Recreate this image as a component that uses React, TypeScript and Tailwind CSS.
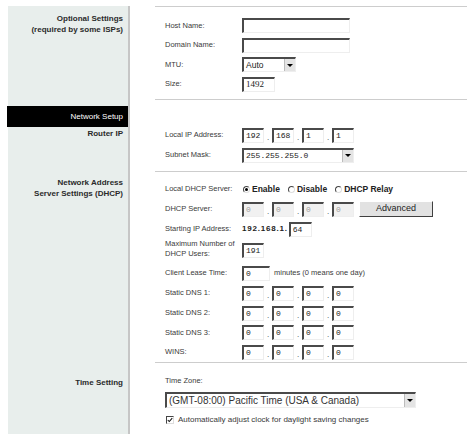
import React from 'react';

const sunken =
  'border-t-2 border-l-2 border-b border-r border-t-[#4a4a4a] border-l-[#4a4a4a] border-b-[#eeeeee] border-r-[#eeeeee]';

const Box: React.FC<{ w: number; value?: string; disabled?: boolean; serif?: boolean }> = ({ w, value = '', disabled, serif }) => (
  <div
    className={`${sunken} h-[15px] flex items-center pl-[2px] overflow-hidden ${disabled ? 'bg-[#f1f1f1] text-[#a0a0a0]' : 'bg-white text-[#222]'} ${
      serif ? "font-['Liberation_Serif',serif] text-[9px] text-[#9a9a9a]" : "font-['Liberation_Mono',monospace] text-[8px]"
    }`}
    style={{ width: w }}
  >
    {value}
  </div>
);

const Arrow: React.FC = () => (
  <div className="w-[11px] h-full bg-[#e4e4e4] border-l border-[#bcbcbc] flex items-center justify-center">
    <div className="w-0 h-0 border-l-[3px] border-r-[3px] border-t-[3px] border-l-transparent border-r-transparent border-t-black" />
  </div>
);

const Select: React.FC<{ w: number; value: string; mono?: boolean; big?: boolean }> = ({ w, value, mono, big }) => (
  <div
    className={`${sunken} ${big ? 'h-[16px]' : 'h-[15px]'} flex items-center bg-white text-[#222]`}
    style={{ width: w }}
  >
    <span
      className={`flex-1 pl-[2px] ${
        mono ? "font-['Liberation_Mono',monospace] text-[8px]" : big ? 'text-[10px] text-[#333]' : 'text-[8.5px]'
      }`}
    >
      {value}
    </span>
    <Arrow />
  </div>
);

const Dot: React.FC = () => <span className="w-[8px] text-center text-[8px] leading-none pt-[5px]">.</span>;

const IP: React.FC<{ values: string[]; disabled?: boolean }> = ({ values, disabled }) => (
  <div className="flex items-center">
    {values.map((v, i) => (
      <React.Fragment key={i}>
        {i > 0 && <Dot />}
        <Box w={22} value={v} disabled={disabled} />
      </React.Fragment>
    ))}
  </div>
);

const Row: React.FC<{ label: React.ReactNode; h?: string; children?: React.ReactNode; top?: boolean }> = ({ label, h = 'h-[20px]', children, top }) => (
  <div className={`flex ${top ? 'items-start' : 'items-center'} ${h}`}>
    <div className="w-[77px] leading-[10px]">{label}</div>
    {children}
  </div>
);

const Radio: React.FC<{ on?: boolean; label: string }> = ({ on, label }) => (
  <div className="flex items-center gap-[2px] mr-[8px]">
    <div className="w-[7px] h-[7px] rounded-full border border-t-[#444] border-l-[#444] border-b-[#ddd] border-r-[#ddd] bg-white flex items-center justify-center">
      {on && <div className="w-[3px] h-[3px] rounded-full bg-black" />}
    </div>
    <span className="font-bold text-[8.5px] text-[#222]">{label}</span>
  </div>
);

const Side: React.FC<{ children?: React.ReactNode; className?: string }> = ({ children, className = '' }) => (
  <div className={`w-[122px] shrink-0 bg-[#e8eeec] border-r-2 border-[#c6c6c6] text-right pr-[5px] font-bold text-[8px] leading-[11px] text-[#2a2a2a] ${className}`}>
    {children}
  </div>
);

export default function App() {
  return (
    <div className="w-[473px] h-[434px] overflow-hidden bg-white pl-[8px] pt-[6px] flex flex-col font-['Liberation_Sans',Arial,sans-serif] text-[7.5px] text-[#3a3a3a]">
      {/* Optional settings */}
      <div className="flex">
        <Side className="pt-[7px]">
          <div>Optional Settings</div>
          <div>(required by some ISPs)</div>
        </Side>
        <div className="ml-[25px] w-[312px] border-y border-[#cdcdcd] pl-[10px] pt-[9px] pb-[5px]">
          <Row label="Host Name:" h="h-[19.5px]">
            <Box w={108} />
          </Row>
          <Row label="Domain Name:" h="h-[19.5px]">
            <Box w={108} />
          </Row>
          <Row label="MTU:" h="h-[19.5px]">
            <Select w={54} value="Auto" />
          </Row>
          <Row label="Size:" h="h-[19.5px]">
            <Box w={33} value="1492" serif />
          </Row>
        </div>
      </div>

      {/* Network setup / Router IP */}
      <div className="flex">
        <Side>
          <div className="-mr-[5px] -ml-[1px] mt-[6px] h-[21px] bg-black text-white font-normal flex items-center justify-end pr-[5px]">
            Network Setup
          </div>
          <div className="mt-[1px]">Router IP</div>
        </Side>
        <div className="ml-[25px] w-[312px] border-b border-[#cdcdcd] pl-[10px] pt-[25px] pb-[6px]">
          <Row label="Local IP Address:">
            <IP values={['192', '168', '1', '1']} />
          </Row>
          <Row label="Subnet Mask:">
            <Select w={112} value="255.255.255.0" mono />
          </Row>
        </div>
      </div>

      {/* DHCP */}
      <div className="flex">
        <Side className="pt-[5px]">
          <div>Network Address</div>
          <div>Server Settings (DHCP)</div>
        </Side>
        <div className="ml-[25px] w-[312px] border-b border-[#cdcdcd] pl-[10px] pt-[7px]">
          <Row label="Local DHCP Server:">
            <div className="flex items-center pl-[1px]">
              <Radio on label="Enable" />
              <Radio label="Disable" />
              <Radio label="DHCP Relay" />
            </div>
          </Row>
          <Row label="DHCP Server:">
            <IP values={['0', '0', '0', '0']} disabled />
            <div className="ml-[5px] w-[74px] h-[16px] bg-[#e2e2e2] border border-t-white border-l-white border-b-[#404040] border-r-[#404040] flex items-center justify-center text-[9px] text-[#222]">
              Advanced
            </div>
          </Row>
          <Row label="Starting IP Address:">
            <span className="font-bold text-[8px] tracking-[0.8px] text-[#222] mr-[1px]">192.168.1.</span>
            <Box w={23} value="64" />
          </Row>
          <Row
            label={
              <>
                <div>Maximum Number of</div>
                <div>DHCP Users:</div>
              </>
            }
            h="h-[24px]"
            top
          >
            <div className="mt-[4px]">
              <Box w={22} value="191" />
            </div>
          </Row>
          <Row label="Client Lease Time:">
            <Box w={28} value="0" />
            <span className="ml-[4px]">minutes (0 means one day)</span>
          </Row>
          <Row label="Static DNS 1:">
            <IP values={['0', '0', '0', '0']} />
          </Row>
          <Row label="Static DNS 2:">
            <IP values={['0', '0', '0', '0']} />
          </Row>
          <Row label="Static DNS 3:" h="h-[19.5px]">
            <IP values={['0', '0', '0', '0']} />
          </Row>
          <Row label="WINS:" h="h-[19.5px]">
            <IP values={['0', '0', '0', '0']} />
          </Row>
        </div>
      </div>

      {/* Time setting */}
      <div className="flex flex-1">
        <Side className="pt-[14px]">
          <div>Time Setting</div>
        </Side>
        <div className="ml-[25px] w-[312px] pl-[10px] pt-[10px]">
          <div className="h-[16px] flex items-center">Time Zone:</div>
          <div className="mt-[3px]">
            <Select w={251} value="(GMT-08:00) Pacific Time (USA & Canada)" big />
          </div>
          <div className="mt-[5px] h-[14px] flex items-center pl-[1px]">
            <div className="w-[8px] h-[8px] border border-t-[#444] border-l-[#444] border-b-[#ddd] border-r-[#ddd] bg-white flex items-center justify-center">
              <svg viewBox="0 0 8 8" className="w-[6px] h-[6px]">
                <path d="M1 4 L3 6 L7 1.5" fill="none" stroke="#111" strokeWidth="1.4" />
              </svg>
            </div>
            <span className="ml-[4px] text-[8px]">Automatically adjust clock for daylight saving changes</span>
          </div>
        </div>
      </div>
    </div>
  );
}
